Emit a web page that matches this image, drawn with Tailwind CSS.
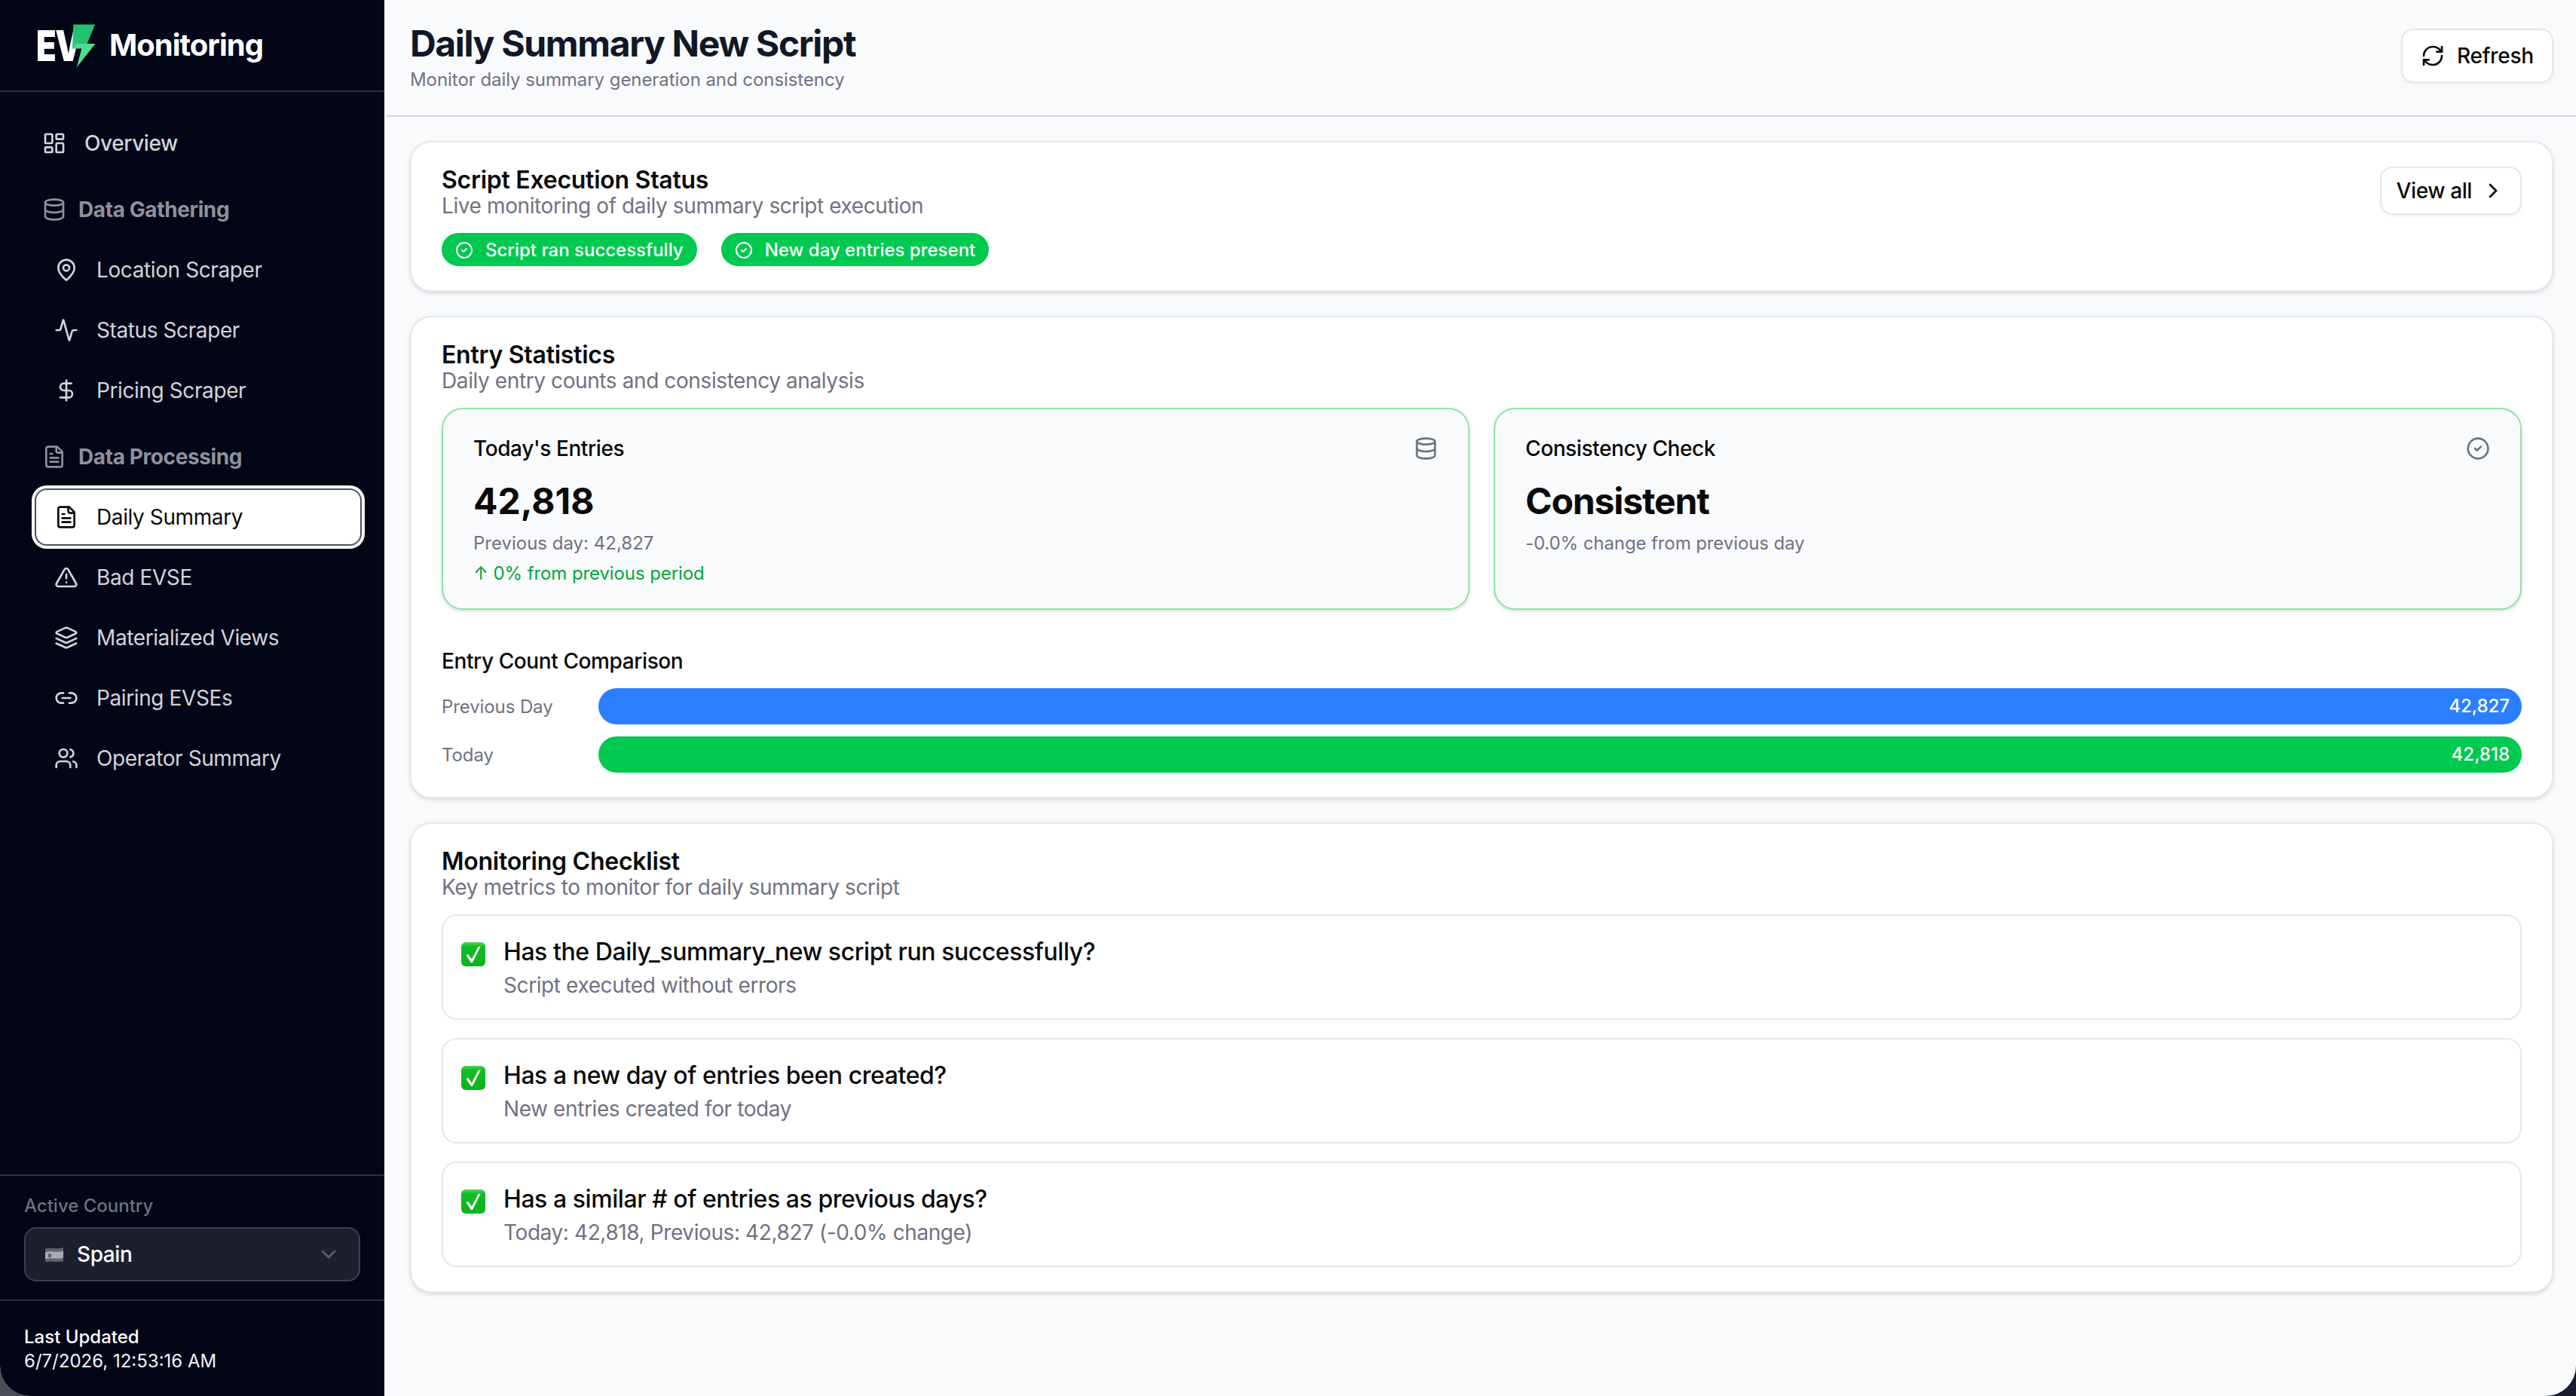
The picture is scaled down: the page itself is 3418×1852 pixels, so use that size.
<!DOCTYPE html>
<html lang="en">
<head>
    <meta charset="UTF-8">
    <title>EV Monitoring - Daily Summary</title>
    <script src="https://cdn.jsdelivr.net/npm/@tailwindcss/browser@4"></script>
</head>

<body class="bg-gradient-to-r from-[#4b4d57] via-[#1a1b2c] to-[#1a1b2c] overflow-hidden">

<div class="[zoom:2] w-[1709px] h-[926px] flex overflow-hidden rounded-b-[20px] bg-gray-50 font-[Inter,sans-serif] text-neutral-950">

    <!-- Sidebar -->
    <aside class="w-64 shrink-0 h-full flex flex-col bg-[#020617] border-r border-white text-[#d4d4d8]">
        <div class="h-[61px] shrink-0 flex items-center pl-6 border-b border-[#2b2e3b]">
            <div class="relative w-[48.5px] h-[30px] shrink-0 mt-px">
                <span class="absolute left-0 top-0 text-[28px] leading-[30px] font-black text-white origin-left scale-x-[.78] tracking-[-1px]">EV</span>
                <svg class="absolute left-0 top-0 w-[41px] h-[30px]" viewBox="0 0 41 30">
                    <polygon fill="#24c170" points="24.7,.7 39,.7 33.8,13.5 24,16.8"/>
                    <polygon fill="#52da92" points="24.4,16.8 26,13.5 39.3,13.5 26.85,29.3 30.15,16.8"/>
                </svg>
            </div>
            <span class="text-xl leading-7 font-bold tracking-tight text-white">Monitoring</span>
        </div>

        <nav class="flex-1 px-4 pt-[15px] pr-[15px] flex flex-col gap-0.5 text-sm tracking-[-0.2px]">
            <a class="h-[38px] px-3 flex items-center gap-3 font-medium">
                <svg class="size-4 shrink-0" fill="none" stroke="currentColor" stroke-width="2" stroke-linecap="round" stroke-linejoin="round" viewBox="0 0 24 24"><rect width="7" height="9" x="3" y="3" rx="1"/><rect width="7" height="5" x="14" y="3" rx="1"/><rect width="7" height="9" x="14" y="12" rx="1"/><rect width="7" height="5" x="3" y="16" rx="1"/></svg>
                <span>Overview</span>
            </a>

            <!-- Data Gathering -->
            <div class="h-[38px] mt-1 px-3 flex items-center gap-2 font-bold text-[#8e919b]">
                <svg class="size-4 shrink-0" fill="none" stroke="currentColor" stroke-width="2" stroke-linecap="round" stroke-linejoin="round" viewBox="0 0 24 24"><ellipse cx="12" cy="5" rx="9" ry="3"/><path d="M3 5V19A9 3 0 0 0 21 19V5"/><path d="M3 12A9 3 0 0 0 21 12"/></svg>
                <span>Data Gathering</span>
            </div>
            <a class="h-[38px] ml-[7px] px-[13px] flex items-center gap-3">
                <svg class="size-4 shrink-0" fill="none" stroke="currentColor" stroke-width="2" stroke-linecap="round" stroke-linejoin="round" viewBox="0 0 24 24"><path d="M20 10c0 4.993-5.539 10.193-7.399 11.799a1 1 0 0 1-1.202 0C9.539 20.193 4 14.993 4 10a8 8 0 0 1 16 0"/><circle cx="12" cy="10" r="3"/></svg>
                <span>Location Scraper</span>
            </a>
            <a class="h-[38px] ml-[7px] px-[13px] flex items-center gap-3">
                <svg class="size-4 shrink-0" fill="none" stroke="currentColor" stroke-width="2" stroke-linecap="round" stroke-linejoin="round" viewBox="0 0 24 24"><path d="M22 12h-2.48a2 2 0 0 0-1.93 1.46l-2.35 8.36a.25.25 0 0 1-.48 0L9.24 2.18a.25.25 0 0 0-.48 0l-2.35 8.36A2 2 0 0 1 4.49 12H2"/></svg>
                <span>Status Scraper</span>
            </a>
            <a class="h-[38px] ml-[7px] px-[13px] flex items-center gap-3">
                <svg class="size-4 shrink-0" fill="none" stroke="currentColor" stroke-width="2" stroke-linecap="round" stroke-linejoin="round" viewBox="0 0 24 24"><line x1="12" x2="12" y1="2" y2="22"/><path d="M17 5H9.5a3.5 3.5 0 0 0 0 7h5a3.5 3.5 0 0 1 0 7H6"/></svg>
                <span>Pricing Scraper</span>
            </a>

            <!-- Data Processing -->
            <div class="h-[38px] mt-1 px-3 flex items-center gap-2 font-bold text-[#8e919b]">
                <svg class="size-4 shrink-0" fill="none" stroke="currentColor" stroke-width="2" stroke-linecap="round" stroke-linejoin="round" viewBox="0 0 24 24"><path d="M15 2H6a2 2 0 0 0-2 2v16a2 2 0 0 0 2 2h12a2 2 0 0 0 2-2V7Z"/><path d="M14 2v4a2 2 0 0 0 2 2h4"/><path d="M10 9H8"/><path d="M16 13H8"/><path d="M16 17H8"/></svg>
                <span>Data Processing</span>
            </div>
            <a class="h-[38px] ml-[7px] px-3 flex items-center gap-3 rounded-lg bg-white text-neutral-950 border border-[#4a5060] ring-2 ring-white">
                <svg class="size-4 shrink-0" fill="none" stroke="currentColor" stroke-width="2" stroke-linecap="round" stroke-linejoin="round" viewBox="0 0 24 24"><path d="M15 2H6a2 2 0 0 0-2 2v16a2 2 0 0 0 2 2h12a2 2 0 0 0 2-2V7Z"/><path d="M14 2v4a2 2 0 0 0 2 2h4"/><path d="M10 9H8"/><path d="M16 13H8"/><path d="M16 17H8"/></svg>
                <span>Daily Summary</span>
            </a>
            <a class="h-[38px] ml-[7px] px-[13px] flex items-center gap-3">
                <svg class="size-4 shrink-0" fill="none" stroke="currentColor" stroke-width="2" stroke-linecap="round" stroke-linejoin="round" viewBox="0 0 24 24"><path d="m21.73 18-8-14a2 2 0 0 0-3.48 0l-8 14A2 2 0 0 0 4 21h16a2 2 0 0 0 1.73-3"/><path d="M12 9v4"/><path d="M12 17h.01"/></svg>
                <span>Bad EVSE</span>
            </a>
            <a class="h-[38px] ml-[7px] px-[13px] flex items-center gap-3">
                <svg class="size-4 shrink-0" fill="none" stroke="currentColor" stroke-width="2" stroke-linecap="round" stroke-linejoin="round" viewBox="0 0 24 24"><path d="M12.83 2.18a2 2 0 0 0-1.66 0L2.6 6.08a1 1 0 0 0 0 1.83l8.58 3.91a2 2 0 0 0 1.66 0l8.58-3.9a1 1 0 0 0 0-1.83Z"/><path d="m22 17.65-9.17 4.16a2 2 0 0 1-1.66 0L2 17.65"/><path d="m22 12.65-9.17 4.16a2 2 0 0 1-1.66 0L2 12.65"/></svg>
                <span>Materialized Views</span>
            </a>
            <a class="h-[38px] ml-[7px] px-[13px] flex items-center gap-3">
                <svg class="size-4 shrink-0" fill="none" stroke="currentColor" stroke-width="2" stroke-linecap="round" stroke-linejoin="round" viewBox="0 0 24 24"><path d="M9 17H7A5 5 0 0 1 7 7h2"/><path d="M15 7h2a5 5 0 1 1 0 10h-2"/><line x1="8" x2="16" y1="12" y2="12"/></svg>
                <span>Pairing EVSEs</span>
            </a>
            <a class="h-[38px] ml-[7px] px-[13px] flex items-center gap-3">
                <svg class="size-4 shrink-0" fill="none" stroke="currentColor" stroke-width="2" stroke-linecap="round" stroke-linejoin="round" viewBox="0 0 24 24"><path d="M16 21v-2a4 4 0 0 0-4-4H6a4 4 0 0 0-4 4v2"/><circle cx="9" cy="7" r="4"/><path d="M22 21v-2a4 4 0 0 0-3-3.87"/><path d="M16 3.13a4 4 0 0 1 0 7.75"/></svg>
                <span>Operator Summary</span>
            </a>
        </nav>

        <!-- Country picker -->
        <div class="shrink-0 pl-4 pr-4 py-3 border-t border-[#2b2e3b]">
            <div class="text-xs font-medium text-[#6f717b] mb-1.5">Active Country</div>
            <div class="h-9 flex items-center rounded-lg border border-[#3d404e] bg-[#1c1f2e] pl-[13px] pr-3 text-sm tracking-[-0.2px] text-white font-medium">
                <svg class="w-3 h-2.5 shrink-0 mr-[9px]" viewBox="0 0 24 20">
                    <path fill="#5f6268" d="M0 3c8-3 16 1 24-2v18c-8 3-16-1-24 2z"/>
                    <path fill="#a9abb0" d="M0 7.5c8-3 16 1 24-2v9c-8 3-16-1-24 2z"/>
                    <rect fill="#5f6268" x="4" y="9" width="4" height="5" rx="1"/>
                </svg>
                <span>Spain</span>
                <svg class="size-4 ml-auto opacity-50 text-gray-400" fill="none" stroke="currentColor" stroke-width="2" stroke-linecap="round" stroke-linejoin="round" viewBox="0 0 24 24"><path d="m6 9 6 6 6-6"/></svg>
            </div>
        </div>

        <div class="shrink-0 h-16 p-4 border-t border-[#2b2e3b] text-xs text-[#f3f4f6]">
            <div class="font-medium text-white">Last Updated</div>
            <div>6/7/2026, 12:53:16 AM</div>
        </div>
    </aside>

    <!-- Main -->
    <main class="flex-1 min-w-0 flex flex-col">
        <header class="h-[77.5px] shrink-0 flex items-center justify-between pl-4 pr-[15px] pb-[3px] border-b border-gray-300">
            <div>
                <h1 class="text-2xl font-bold tracking-[-0.68px] text-[#101828]">Daily Summary New Script</h1>
                <p class="text-xs tracking-[-0.03px] text-[#717182]">Monitor daily summary generation and consistency</p>
            </div>
            <button class="h-9 px-3 flex items-center gap-2 rounded-lg border border-gray-200 bg-white shadow-xs text-sm font-medium tracking-[-0.1px]">
                <svg class="size-4" fill="none" stroke="currentColor" stroke-width="2" stroke-linecap="round" stroke-linejoin="round" viewBox="0 0 24 24"><path d="M3 12a9 9 0 0 1 9-9 9.75 9.75 0 0 1 6.74 2.74L21 8"/><path d="M21 3v5h-5"/><path d="M21 12a9 9 0 0 1-9 9 9.75 9.75 0 0 1-6.74-2.74L3 16"/><path d="M8 16H3v5"/></svg>
                Refresh
            </button>
        </header>

        <div class="flex-1 min-h-0 pl-4 pr-[15px] pt-4 flex flex-col gap-4">

            <!-- Script Execution Status -->
            <section class="bg-white border border-[#e4e9f0] rounded-[14px] shadow-sm px-5 py-4 flex items-start justify-between">
                <div>
                    <h2 class="h-4 text-base leading-[18px] font-semibold tracking-[-0.13px]">Script Execution Status</h2>
                    <p class="text-sm tracking-[-0.2px] text-[#717182]">Live monitoring of daily summary script execution</p>
                    <div class="mt-2 flex gap-4">
                        <span class="h-[22px] px-[9px] pt-px flex items-center gap-2 rounded-full bg-[#00c950] text-white text-xs font-medium">
                            <svg class="size-3" fill="none" stroke="currentColor" stroke-width="2" stroke-linecap="round" stroke-linejoin="round" viewBox="0 0 24 24"><circle cx="12" cy="12" r="10"/><path d="m9 12 2 2 4-4"/></svg>
                            Script ran successfully
                        </span>
                        <span class="h-[22px] px-[9px] pt-px flex items-center gap-2 rounded-full bg-[#00c950] text-white text-xs font-medium">
                            <svg class="size-3" fill="none" stroke="currentColor" stroke-width="2" stroke-linecap="round" stroke-linejoin="round" viewBox="0 0 24 24"><circle cx="12" cy="12" r="10"/><path d="m9 12 2 2 4-4"/></svg>
                            New day entries present
                        </span>
                    </div>
                </div>
                <button class="h-8 px-2.5 flex items-center gap-1.5 rounded-lg border border-gray-200 bg-white shadow-xs text-sm font-medium tracking-[-0.2px]">
                    View all
                    <svg class="size-4" fill="none" stroke="currentColor" stroke-width="2" stroke-linecap="round" stroke-linejoin="round" viewBox="0 0 24 24"><path d="m9 18 6-6-6-6"/></svg>
                </button>
            </section>

            <!-- Entry Statistics -->
            <section class="bg-white border border-[#e4e9f0] rounded-[14px] shadow-sm px-5 py-4">
                <h2 class="h-4 text-base leading-[18px] font-semibold tracking-[-0.13px]">Entry Statistics</h2>
                <p class="text-sm tracking-[-0.2px] text-[#717182]">Daily entry counts and consistency analysis</p>

                <div class="mt-2 grid grid-cols-2 gap-4">
                    <div class="h-[134px] px-5 py-4 bg-gray-50 border border-[#8ee4a9] rounded-[14px] shadow-sm">
                        <div class="flex items-center justify-between">
                            <span class="text-sm font-medium tracking-[-0.2px]">Today's Entries</span>
                            <svg class="size-4 text-gray-500" fill="none" stroke="currentColor" stroke-width="2" stroke-linecap="round" stroke-linejoin="round" viewBox="0 0 24 24"><ellipse cx="12" cy="5" rx="9" ry="3"/><path d="M3 5V19A9 3 0 0 0 21 19V5"/><path d="M3 12A9 3 0 0 0 21 12"/></svg>
                        </div>
                        <div class="mt-[9px] text-2xl font-bold">42,818</div>
                        <div class="mt-1 text-xs text-[#717182]">Previous day: 42,827</div>
                        <div class="mt-1 text-xs text-[#00a63e] tracking-[-0.05px]">↑ 0% from previous period</div>
                    </div>
                    <div class="h-[134px] px-5 py-4 bg-gray-50 border border-[#8ee4a9] rounded-[14px] shadow-sm">
                        <div class="flex items-center justify-between">
                            <span class="text-sm font-medium tracking-[-0.2px]">Consistency Check</span>
                            <svg class="size-4 text-gray-500" fill="none" stroke="currentColor" stroke-width="2" stroke-linecap="round" stroke-linejoin="round" viewBox="0 0 24 24"><circle cx="12" cy="12" r="10"/><path d="m9 12 2 2 4-4"/></svg>
                        </div>
                        <div class="mt-[9px] text-2xl font-bold tracking-[-0.55px]">Consistent</div>
                        <div class="mt-1 text-xs tracking-[-0.05px] text-[#717182]">-0.0% change from previous day</div>
                    </div>
                </div>

                <h3 class="mt-6 mb-2 text-sm font-medium tracking-[-0.2px]">Entry Count Comparison</h3>
                <div class="flex flex-col gap-2">
                    <div class="flex items-center gap-2">
                        <span class="w-24 shrink-0 pt-px text-xs text-[#717182] tracking-[-0.05px]">Previous Day</span>
                        <div class="flex-1 h-6 flex items-center justify-end pr-2 rounded-full bg-[#2b7fff] text-xs font-medium text-white">42,827</div>
                    </div>
                    <div class="flex items-center gap-2">
                        <span class="w-24 shrink-0 pt-px text-xs text-[#717182] tracking-[-0.05px]">Today</span>
                        <div class="flex-1 h-6 flex items-center justify-end pr-2 rounded-full bg-[#00c950] text-xs font-medium text-white">42,818</div>
                    </div>
                </div>
            </section>

            <!-- Monitoring Checklist -->
            <section class="bg-white border border-[#e4e9f0] rounded-[14px] shadow-sm px-5 py-4">
                <h2 class="h-4 text-base leading-[18px] font-semibold tracking-[-0.13px]">Monitoring Checklist</h2>
                <p class="text-sm tracking-[-0.2px] text-[#717182]">Key metrics to monitor for daily summary script</p>

                <div class="mt-2 flex flex-col gap-3">
                    <div class="p-3 flex gap-3 border border-gray-200 rounded-[10px]">
                        <svg class="size-4 shrink-0 mt-[5.5px]" viewBox="0 0 16 16"><defs><linearGradient id="chk" x1="0" y1="0" x2="0" y2="1"><stop offset="0" stop-color="#4fd45c"/><stop offset=".18" stop-color="#12bc24"/><stop offset="1" stop-color="#0cb31c"/></linearGradient></defs><rect width="16" height="16" rx="3" fill="url(#chk)"/><path fill="#fff" d="M3.2 8.6 4.6 7.9 7 11.2 11.3 2.9 12.8 2.9 7.5 13.5 6.4 13.5z"/></svg>
                        <div>
                            <div class="font-medium tracking-[-0.22px]">Has the Daily_summary_new script run successfully?</div>
                            <div class="text-sm tracking-[-0.2px] text-[#717182]">Script executed without errors</div>
                        </div>
                    </div>
                    <div class="p-3 flex gap-3 border border-gray-200 rounded-[10px]">
                        <svg class="size-4 shrink-0 mt-[5.5px]" viewBox="0 0 16 16"><rect width="16" height="16" rx="3" fill="url(#chk)"/><path fill="#fff" d="M3.2 8.6 4.6 7.9 7 11.2 11.3 2.9 12.8 2.9 7.5 13.5 6.4 13.5z"/></svg>
                        <div>
                            <div class="font-medium tracking-[-0.22px]">Has a new day of entries been created?</div>
                            <div class="text-sm tracking-[-0.2px] text-[#717182]">New entries created for today</div>
                        </div>
                    </div>
                    <div class="p-3 flex gap-3 border border-gray-200 rounded-[10px]">
                        <svg class="size-4 shrink-0 mt-[5.5px]" viewBox="0 0 16 16"><rect width="16" height="16" rx="3" fill="url(#chk)"/><path fill="#fff" d="M3.2 8.6 4.6 7.9 7 11.2 11.3 2.9 12.8 2.9 7.5 13.5 6.4 13.5z"/></svg>
                        <div>
                            <div class="font-medium tracking-[-0.22px]">Has a similar # of entries as previous days?</div>
                            <div class="text-sm tracking-[-0.2px] text-[#717182]">Today: 42,818, Previous: 42,827 (-0.0% change)</div>
                        </div>
                    </div>
                </div>
            </section>
        </div>
    </main>
</div>

</body>
</html>
